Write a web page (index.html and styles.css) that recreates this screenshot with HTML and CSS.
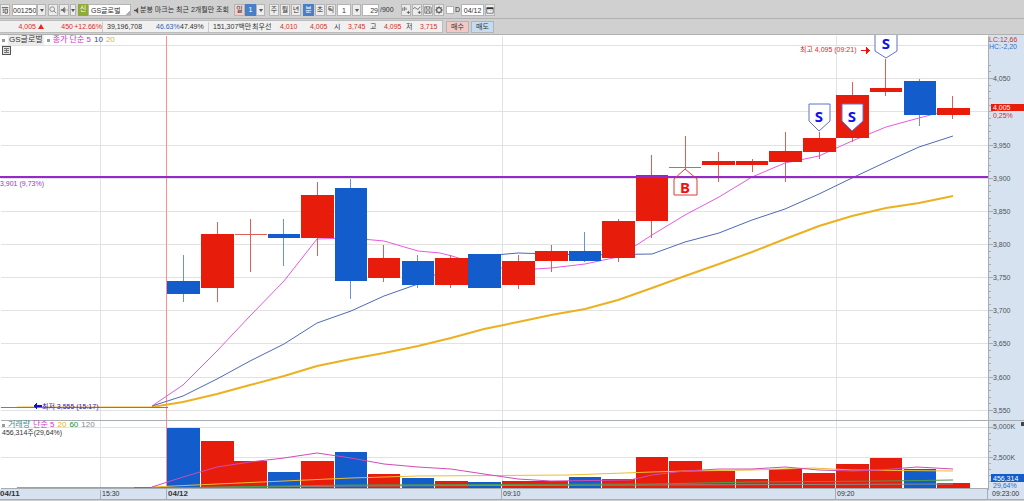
FILE: index.html
```html
<!DOCTYPE html>
<html lang="ko">
<head>
<meta charset="utf-8">
<title>GS글로벌 분봉 차트</title>
<link rel="stylesheet" href="styles.css">
</head>
<body>
<header class="toolbar">
  <button class="btn" aria-label="화면"><svg class="ico" viewBox="0 0 10 10"><path d="M1 2h8M2 4h2M2 6h2M2 8h2M5 4h3v5H5z" fill="none" stroke="#444"/></svg></button>
  <div class="combo code"><input class="field" aria-label="종목코드" value="001250"><button class="arrow" aria-label="종목 목록"></button></div>
  <div class="group">
    <button class="btn" aria-label="검색"><svg class="ico" viewBox="0 0 10 10"><circle cx="4" cy="4" r="3" fill="none" stroke="#777"/><path d="M6 6l3 3" stroke="#777"/></svg></button>
    <button class="btn" aria-label="소리"><svg class="ico" viewBox="0 0 10 10"><path d="M1 4h2l3-3v8L3 6H1z" fill="#666"/><path d="M7 3v4M9 4v2" stroke="#999"/></svg></button>
    <button class="arrow slim" aria-label="소리 설정"></button>
  </div>
  <div class="combo name"><span class="badge">신</span><input class="field" aria-label="종목명" value="GS글로벌"></div>
  <p class="notice"><svg class="mini" viewBox="0 0 6 8"><path d="M0 3h2l3-3v8L2 5H0z" fill="#555"/></svg>분봉 마크는 최근 2개월만 조회</p>
  <div class="group joined">
    <button class="btn pink">일</button><button class="btn on">1</button><button class="arrow" aria-label="일 단위"></button>
  </div>
  <div class="group period">
    <button class="btn">주</button><button class="btn">월</button><button class="btn">년</button>
  </div>
  <div class="group">
    <button class="btn on">분</button><button class="btn">초</button><button class="btn">틱</button>
    <input class="field unit" aria-label="분 단위" value="1"><button class="arrow" aria-label="분 단위 목록"></button>
    <input class="field count" aria-label="봉 개수" value="29"><span class="total">/900</span>
  </div>
  <div class="group tools">
    <button class="btn" aria-label="봉 추가"><svg class="ico" viewBox="0 0 10 10"><path d="M1 2v4M3 1v5M5 2v3M6 8h4M8 6v4" stroke="#555"/></svg></button>
    <button class="btn" aria-label="지표 추가"><svg class="ico" viewBox="0 0 10 10"><path d="M0 4q2-4 4-1t5-2M6 8h4M8 6v4" fill="none" stroke="#555"/></svg></button>
    <button class="btn" aria-label="저장"><svg class="ico" viewBox="0 0 10 10"><path d="M1 1h7l1 1v7H1zM3 1v3h4V1M3 9V6h4v3" fill="none" stroke="#666"/></svg></button>
    <button class="btn" aria-label="설정"><svg class="ico" viewBox="0 0 10 10"><circle cx="5" cy="5" r="3" fill="none" stroke="#555" stroke-width="1.4"/><path d="M5 0v2M5 8v2M0 5h2M8 5h2M1.5 1.5l1 1M7.5 7.5l1 1M8.5 1.5l-1 1M2.5 7.5l-1 1" stroke="#555"/></svg></button>
  </div>
  <div class="group date">
    <label class="check"><input type="checkbox">D</label>
    <input class="field day" aria-label="날짜" value="04/12"><button class="btn" aria-label="달력"><svg class="ico" viewBox="0 0 10 10"><path d="M1 2h8v7H1z" fill="#fff" stroke="#555"/><path d="M1 3h8" stroke="#333" stroke-width="2"/><path d="M3 6h1M5 6h2" stroke="#999"/></svg></button>
  </div>
</header>

<section class="quote">
  <div class="strip">
    <span class="up">4,005<i class="tri"></i></span><span class="up">450</span><span class="up">+12.66%</span>
    <span class="line">39,196,708</span><span class="blue">46.63%</span><span>47.49%</span>
    <span class="line">151,307백만</span><span>최우선</span><span class="up">4,010</span><span class="up">4,005</span>
    <span>시</span><span class="up">3,745</span><span>고</span><span class="up">4,095</span><span>저</span><span class="up">3,715</span>
  </div>
  <button class="order buy">매수</button>
  <button class="order sell">매도</button>
</section>

<main class="chart">
  <section class="pane">
    <svg class="plot" viewBox="0 35 1024 385">
      <rect class="bg" x="0" y="35" width="1024" height="385"/>
      <path class="grid" d="M0 45h988M0 78h988M0 111h988M0 145h988M0 178h988M0 211h988M0 244h988M0 277h988M0 310h988M0 343h988M0 377h988M0 410h988M100 35v385M502 35v385M836 35v385"/>
      <path class="session" d="M166 35v385"/>
      <g class="ma">
        <path class="gold thick" d="M152 407L183 402 217 394 250 385 284 376 317 366 351 359 384 353 418 346 451 338 484 329 518 322 551 315 585 309 618 300 652 288 685 276 719 264 752 252 785 239 819 226 852 216 886 208 919 203 953 196"/>
        <path class="gold" d="M17 407H152"/>
        <path class="navy" d="M152 406L183 396 217 379 250 361 284 344 317 323 351 311 384 296 418 284 451 266 484 256 518 253 551 254 585 255 652 254 685 242 719 233 752 220 785 209 819 194 852 178 886 162 919 147 953 136"/>
        <path class="magenta" d="M152 406L183 385 217 351 250 316 284 281 317 239 351 238 384 241 418 251 440 253 452 256 484 266 518 270 551 268 585 264 618 257 652 235 685 215 719 197 752 177 785 163 819 156 852 141 886 127 919 118 953 109"/>
      </g>
      <path class="low" d="M0 407h167"/>
      <g class="fall">
        <path class="wick" d="M184 254v47M284 218v47M351 178v120M418 254v33M585 231v30M920 78v47"/>
        <path d="M167 281h33v13h-33zM268 234h32v4h-32zM335 188h32v93h-32zM402 261h32v24h-32zM468 254h33v34h-33zM569 251h32v10h-32zM904 81h32v34h-32z"/>
      </g>
      <g class="rise">
        <path class="wick" d="M218 221v80M251 218v53M318 181v74M384 244v37M451 254v33M519 254v34M552 244v27M619 218v43M652 154v83M686 135v33M719 151v30M753 158v13M786 131v50M820 131v27M853 81v60M886 58v37M953 95v23M235 234h32M669 167h32"/>
        <path d="M201 234h33v54h-33zM301 195h33v43h-33zM368 258h32v20h-32zM435 258h33v27h-33zM502 261h33v24h-33zM535 251h33v10h-33zM602 221h33v37h-33zM636 175h32v46h-32zM702 161h33v4h-33zM736 161h32v4h-32zM769 151h33v11h-33zM803 138h33v14h-33zM836 95h33v43h-33zM870 88h32v4h-32zM937 108h33v7h-33z"/>
      </g>
      <path class="level" d="M0 177h988"/>
      <text class="leveltext" x="0" y="186">3,901 (9,73%)</text>
      <g class="mark sell-mark">
        <path d="M809 104h21v17l-11 10-10-10z"/><path d="M842 104h21v17l-11 10-10-10z"/><path d="M875 35v16l11 7 11-7v-16"/>
        <text x="819" y="122">S</text><text x="852" y="122">S</text><text x="886" y="49">S</text>
      </g>
      <g class="mark buy-mark">
        <path d="M674 195v-16l11-10 12 10v16z"/><text x="685" y="193">B</text>
      </g>
      <text class="high" x="800" y="52">최고 4,095 (09:21)</text>
      <path class="higharrow" d="M861 50h5v-3l4 4-4 3v-3h-5z"/>
      <path class="lowarrow" d="M33 406l4-4v3h5v2h-5v3z"/>
      <text class="lowtext" x="42" y="409">최저 3,555 (15:17)</text>
      <rect class="scale" x="988" y="35" width="36" height="385"/>
      <path class="axis" d="M988 35v385"/>
      <path class="axis" d="M988 78h4M988 111h4M988 145h4M988 178h4M988 211h4M988 244h4M988 277h4M988 310h4M988 343h4M988 377h4M988 410h4M988 65h2M988 71h2M988 85h2M988 91h2M988 98h2M988 105h2M988 118h2M988 125h2M988 131h2M988 138h2M988 151h2M988 158h2M988 165h2M988 171h2M988 185h2M988 191h2M988 198h2M988 205h2M988 218h2M988 225h2M988 231h2M988 238h2M988 251h2M988 257h2M988 264h2M988 271h2M988 284h2M988 291h2M988 297h2M988 304h2M988 317h2M988 324h2M988 330h2M988 337h2M988 350h2M988 357h2M988 363h2M988 370h2M988 383h2M988 390h2M988 397h2M988 403h2"/>
      <g class="ticks">
        <text x="993" y="81">4,050</text><text x="993" y="148">3,950</text><text x="993" y="181">3,900</text><text x="993" y="214">3,850</text><text x="993" y="247">3,800</text><text x="993" y="280">3,750</text><text x="993" y="313">3,700</text><text x="993" y="346">3,650</text><text x="993" y="380">3,600</text><text x="993" y="413">3,550</text>
      </g>
      <text class="red" x="989" y="42">LC:12,66</text><text class="sky" x="989" y="49">HC:-2,20</text>
      <rect class="tagred" x="991" y="104" width="33" height="7"/>
      <text class="white" x="993" y="110">4,005</text><text class="red" x="993" y="118">0,25%</text>
    </svg>
    <div class="legend">
      <i class="dot"></i><span class="series">GS글로벌</span><i class="dot"></i>
      <span class="c-magenta">종가 단순 5</span><span class="c-navy">10</span><span class="c-gold">20</span>
    </div>
    <button class="expand" aria-label="보조창"><svg class="cross" viewBox="0 0 9 9"><path class="frame" d="M0 0h9v9H0z"/><path d="M2 2h5v1H2zM2 4h5v1H2zM2 6h5v1H2zM4 2h1v5H4z" fill="#777"/></svg></button>
  </section>

  <section class="pane volume">
    <svg class="plot" viewBox="0 420 1024 69">
      <rect class="bg" x="0" y="420" width="1024" height="69"/>
      <path class="grid" d="M0 427h988M0 457h988M100 420v69M502 420v69M836 420v69"/>
      <path class="session" d="M166 420v69"/>
      <g class="fall"><path d="M167 428h33v60h-33zM268 472h32v16h-32zM335 452h32v36h-32zM402 478h32v10h-32zM468 482h33v6h-33zM569 477h32v11h-32zM904 469h32v19h-32z"/></g>
      <g class="rise"><path d="M134 487h33v1h-33zM201 441h33v47h-33zM234 461h33v27h-33zM301 461h33v27h-33zM368 474h32v14h-32zM435 481h33v7h-33zM502 481h33v7h-33zM535 481h33v7h-33zM602 479h33v9h-33zM636 457h32v31h-32zM669 461h33v27h-33zM702 471h33v17h-33zM736 479h32v9h-32zM769 469h33v19h-33zM803 473h32v15h-32zM836 464h33v24h-33zM870 458h32v30h-32zM937 483h33v5h-33z"/></g>
      <g class="ma">
        <path class="gray" d="M17 488H152L351 486 652 485 953 484"/>
        <path class="green" d="M17 488H152L351 485 652 484 752 482 886 481 953 480"/>
        <path class="gold" d="M152 487L217 484 284 481 351 478 418 476 568 475 652 472 685 471 752 470 813 468 852 470 953 471"/>
        <path class="magenta" d="M152 487L183 477 217 467 250 462 284 458 317 453 351 458 384 464 418 467 451 469 484 474 518 479 551 481 630 480 652 475 685 471 719 469 752 469 785 467 819 470 852 471 880 470 917 467 953 469"/>
      </g>
      <rect class="scale" x="988" y="420" width="36" height="69"/>
      <path class="axis" d="M0 420h1024M0 488h988M988 420v69M988 427h4M988 433h2M988 439h2M988 445h2M988 451h2M988 457h4M988 463h2M988 469h2M988 475h2M988 481h2"/>
      <g class="ticks"><text x="993" y="429">5,000K</text><text x="993" y="460">2,500K</text></g>
      <path d="M1021 422h3v4h-3z" fill="#444"/>
      <rect class="tagblue" x="991" y="474" width="33" height="8"/>
      <text class="white" x="993" y="481">456,314</text><text class="sky" x="993" y="488">29,64%</text>
    </svg>
    <div class="legend vol">
      <i class="dot"></i><span class="c-teal">거래량</span><span class="c-magenta">단순 5</span><span class="c-gold">20</span><span class="c-green">60</span><span class="c-gray">120</span>
    </div>
    <p class="share">456,314주(29,64%)</p>
  </section>

  <footer class="time"><b>04/11</b><span>15:30</span><b>04/12</b><span>09:10</span><span>09:20</span><span>09:23:00</span></footer>
</main>
</body>
</html>
```
FILE: styles.css
```css
* { box-sizing: border-box; }
body, p { margin: 0; }
body, button, input {
  font-family: "Liberation Sans", "Noto Sans CJK KR", sans-serif;
  font-size: 7px;
  line-height: 10px;
  color: #333;
}
body { background: #d0d0d0; }
i { display: inline-block; }
button, input { padding: 0; border: 1px solid #b4b4b4; border-radius: 0; }

.toolbar {
  display: flex;
  align-items: center;
  gap: 2px;
  height: 19px;
  padding-top: 2px;
  border-bottom: 1px solid #b0b0b0;
  white-space: nowrap;
}
.group, .combo { display: flex; align-items: center; }
.group { gap: 1px; }
.joined { gap: 0; }
.period { margin: 0 0 0 2px; }
.btn {
  display: flex;
  align-items: center;
  justify-content: center;
  width: 10px;
  height: 12px;
  background: #ececec;
}
.ico { width: 8px; height: 8px; flex: none; }
.joined .pink { width: 11px; background: #f3cfcb; }
.on { width: 11px; background: #4a7fc6; border-color: #4a7fc6; color: #fff; }
.field { height: 12px; background: #fff; }
.arrow { width: 9px; height: 12px; background: #ececec; display: flex; align-items: center; justify-content: center; }
.arrow::before { content: ""; border: 2px solid transparent; border-top: 3px solid #555; border-bottom: 0; }
.slim { width: 6px; }
.code .field { width: 25px; }
.badge { width: 10px; height: 12px; background: #8dab35; color: #fff; text-align: center; }
.name .field { width: 43px; padding-left: 2px; background: linear-gradient(135deg, #fff 92%, #aaa 92%); }
.notice { display: flex; align-items: center; gap: 1px; width: 99px; padding-left: 1px; }
.mini { width: 5px; height: 7px; }
.unit { width: 14px; text-align: center; }
.count { width: 17px; text-align: right; }
.total { width: 18px; }
.tools { margin-left: 1px; }
.check { display: flex; align-items: center; gap: 1px; }
.check input { appearance: none; width: 8px; height: 8px; margin: 0; background: #fff; }
.day { width: 23px; text-align: center; }

.quote {
  display: flex;
  align-items: center;
  gap: 3px;
  height: 16px;
  border-bottom: 1px solid #b0b0b0;
}
.strip {
  display: grid;
  grid-template-columns: 44px 29px 29px 50px 28px 28px 42px 28px 30px 24px 14px 22px 14px 22px 14px 24px;
  height: 13px;
  align-items: center;
  background: #f0f0f0;
  border: 1px solid #bbb;
  border-left: 0;
  white-space: nowrap;
}
.strip span:nth-child(-n+3) { text-align: right; }
.strip .line { border-left: 1px solid #ccc; padding-left: 4px; }
.strip .blue { padding-left: 4px; color: #2f62b8; }
.strip .up { color: #e02c24; }
.strip span:nth-child(n+8) { padding-left: 2px; }
.tri { margin-left: 2px; border: 3px solid transparent; border-bottom: 5px solid #e8281c; border-top: 0; }
.order { width: 23px; height: 12px; }
.buy { background: #f3c9c5; }
.sell { background: #c4dcf2; margin-left: -1px; }

.chart, .plot { display: block; width: 100%; }
.pane { position: relative; }
.plot { height: auto; font-size: 7px; overflow: visible; }
.plot path, .plot rect { shape-rendering: crispEdges; }
.bg { fill: #fff; }
.grid, .axis, .session, .low { fill: none; stroke: #e2e2e2; }
.plot .grid, .plot .axis, .plot .session, .plot .low { transform: translate(0.5px, 0.5px); }
.plot .axis { stroke: #a8adb4; }
.plot .session { stroke: #ff8f8f; }
.plot .low { stroke: #e2582c; }
.scale { fill: #d7e2f0; }
.plot .ma path, .plot .mark path { fill: none; shape-rendering: auto; }
.gold { stroke: #eebc30; }
.thick { stroke: #ecb020; stroke-width: 2; }
.navy { stroke: #5068b8; }
.magenta { stroke: #e65ae0; }
.volume .magenta { stroke: #cf4cb8; }
.green { stroke: #4c9c50; }
.gray { stroke: #8b8b8b; }
.rise path { fill: #e81c0a; }
.fall path { fill: #125ccc; }
.plot .wick { fill: none; stroke: #dc6058; transform: translate(-0.5px, 0.5px); }
.plot .fall .wick { stroke: #6595d8; }
.level { stroke: #9628cc; stroke-width: 2; }
.leveltext { fill: #9a35cf; }
.plot .sell-mark path { fill: #fff; stroke: #6070d0; }
.plot .buy-mark path { stroke: #df3b34; }
.mark text { font: bold 15px "Noto Sans", sans-serif; text-anchor: middle; fill: #1010ee; }
.plot .buy-mark text { fill: #f01010; }
.high, .red { fill: #d92a24; }
.higharrow { fill: #f01010; }
.lowarrow { fill: #1010d0; }
.lowtext { fill: #3420b0; }
.ticks { fill: #4c5258; }
.sky { fill: #2d70c8; }
.white { fill: #fff; }
.tagred { fill: #e81c0a; }
.tagblue { fill: #125ccc; }

.legend {
  position: absolute;
  top: 0;
  left: 2px;
  display: flex;
  align-items: center;
  gap: 3px;
  font-size: 8px;
  white-space: nowrap;
}
.dot { width: 3px; height: 3px; background: #999; }
.series { padding: 0 1px; background: #ececec; }
.c-magenta { color: #cf30cc; }
.c-navy { color: #2a479c; }
.c-gold { color: #e0b428; }
.c-teal { color: #329292; }
.c-green { color: #228c38; }
.c-gray { color: #888; }
.expand { position: absolute; top: 11px; left: 2px; width: 9px; height: 9px; border: 0; background: #ddd; }
.cross { display: block; width: 9px; height: 9px; }
.plot .frame, .frame { fill: #e4e4e4; stroke: #555; stroke-width: 2; }
.share { position: absolute; top: 8px; left: 2px; }

.time {
  display: grid;
  grid-template-columns: minmax(0, 100fr) minmax(0, 66fr) minmax(0, 335fr) minmax(0, 334fr) minmax(0, 152fr) minmax(0, 37fr);
  height: 11px;
  background: #d7e2f0;
  border-bottom: 1px solid #a8adb4;
  white-space: nowrap;
}
.time > * { padding-left: 1px; border-left: 1px solid #a8adb4; }
.time > :first-child { padding-left: 0; border-left: 0; }
.time b { font-size: 8px; }
.time span:last-child { padding-left: 4px; }
```
